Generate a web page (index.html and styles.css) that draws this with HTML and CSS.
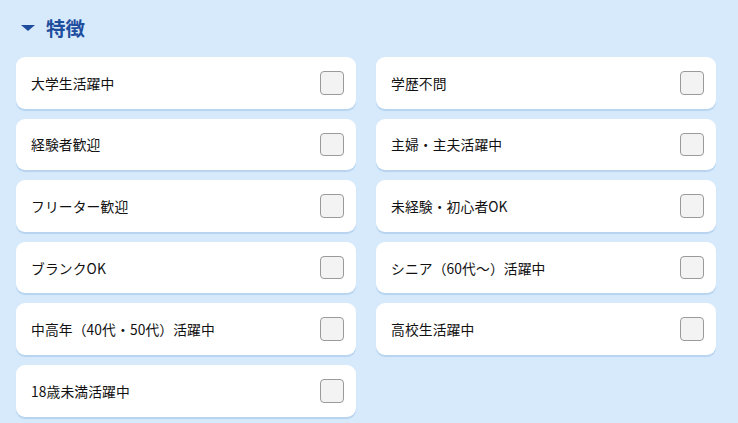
FILE: index.html
```html
<!DOCTYPE html>
<html lang="ja">
<head>
<meta charset="utf-8">
<link rel="stylesheet" href="styles.css">
</head>
<body>
<section class="panel">
  <h2 class="title"><span class="tri"></span>特徴</h2>
  <div class="grid">
    <label class="card"><span class="txt">大学生活躍中</span><span class="box"></span></label>
    <label class="card"><span class="txt">学歴不問</span><span class="box"></span></label>
    <label class="card"><span class="txt">経験者歓迎</span><span class="box"></span></label>
    <label class="card"><span class="txt">主婦・主夫活躍中</span><span class="box"></span></label>
    <label class="card"><span class="txt">フリーター歓迎</span><span class="box"></span></label>
    <label class="card"><span class="txt">未経験・初心者OK</span><span class="box"></span></label>
    <label class="card"><span class="txt">ブランクOK</span><span class="box"></span></label>
    <label class="card"><span class="txt">シニア（60代～）活躍中</span><span class="box"></span></label>
    <label class="card"><span class="txt">中高年（40代・50代）活躍中</span><span class="box"></span></label>
    <label class="card"><span class="txt">高校生活躍中</span><span class="box"></span></label>
    <label class="card"><span class="txt">18歳未満活躍中</span><span class="box"></span></label>
  </div>
</section>
</body>
</html>
```
FILE: styles.css
```css
html, body {
  margin: 0;
  padding: 0;
  background: #d6eafb;
}
body {
  font-family: "Noto Sans CJK JP", "Noto Sans", sans-serif;
  width: 738px;
  height: 423px;
  overflow: hidden;
}
.panel {
  padding: 14px 22px 0 16px;
}
.title {
  margin: 0 0 15px 0;
  height: 28px;
  display: flex;
  align-items: center;
  font-size: 19.5px;
  font-weight: 700;
  color: #1f4d9e;
  line-height: 28px;
}
.tri {
  width: 0;
  height: 0;
  border-left: 7px solid transparent;
  border-right: 7px solid transparent;
  border-top: 6px solid #1f4d9e;
  margin: 0 11px 0 5px;
}
.grid {
  display: grid;
  grid-template-columns: 340px 340px;
  column-gap: 20px;
  row-gap: 10px;
}
.card {
  height: 51.6px;
  box-sizing: border-box;
  background: #fff;
  border-radius: 9px;
  box-shadow: 0 2px 1px #b7d3ee;
  display: flex;
  align-items: center;
  justify-content: space-between;
  padding: 0 12.5px 0 15px;
}
.txt {
  font-size: 13.8px;
  color: #111;
  letter-spacing: 0.1px;
}
.box {
  width: 21.5px;
  height: 21.5px;
  border: 1px solid #9a9a9a;
  border-radius: 4px;
  background: #f3f3f3;
}
```
